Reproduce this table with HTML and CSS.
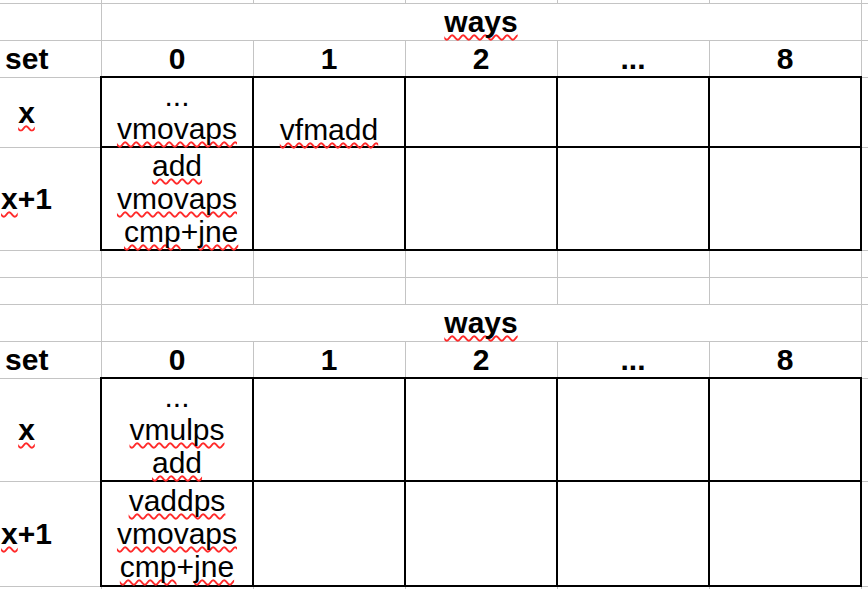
FILE: index.html
```html
<!DOCTYPE html>
<html>
<head>
<meta charset="utf-8">
<link rel="stylesheet" href="styles.css">
</head>
<body>
<table class="sheet">
  <colgroup>
    <col class="col-a"><col class="col-w"><col class="col-w"><col class="col-w"><col class="col-w"><col class="col-w"><col class="col-g">
  </colgroup>
  <tr class="r-top"><td></td><td></td><td></td><td></td><td></td><td></td><td></td></tr>
  <tr class="r-head"><td></td><td colspan="5" class="hd"><span class="sp">ways</span></td><td></td></tr>
  <tr class="r-head"><td class="lbl">set</td><td class="hd">0</td><td class="hd">1</td><td class="hd">2</td><td class="hd">...</td><td class="hd">8</td><td></td></tr>
  <tr class="r-x1"><td class="lbl"><span class="sp">x</span></td><td class="box">...<br><span class="sp">vmovaps</span></td><td class="box bot"><span class="sp">vfmadd</span></td><td class="box"></td><td class="box"></td><td class="box"></td><td></td></tr>
  <tr class="r-x2"><td class="lbl"><span class="sp">x</span>+1</td><td class="box"><span class="sp">add</span><br><span class="sp">vmovaps</span><br>&nbsp;<span class="sp">cmp</span>+<span class="sp">jne</span></td><td class="box"></td><td class="box"></td><td class="box"></td><td class="box"></td><td></td></tr>
  <tr class="r-gap"><td></td><td></td><td></td><td></td><td></td><td></td><td></td></tr>
  <tr class="r-gap"><td></td><td></td><td></td><td></td><td></td><td></td><td></td></tr>
  <tr class="r-head"><td></td><td colspan="5" class="hd"><span class="sp">ways</span></td><td></td></tr>
  <tr class="r-head"><td class="lbl">set</td><td class="hd">0</td><td class="hd">1</td><td class="hd">2</td><td class="hd">...</td><td class="hd">8</td><td></td></tr>
  <tr class="r-x3"><td class="lbl"><span class="sp">x</span></td><td class="box">...<br><span class="sp">vmulps</span><br><span class="sp">add</span></td><td class="box"></td><td class="box"></td><td class="box"></td><td class="box"></td><td></td></tr>
  <tr class="r-x4"><td class="lbl"><span class="sp">x</span>+1</td><td class="box"><span class="sp">vaddps</span><br><span class="sp">vmovaps</span><br><span class="sp">cmp</span>+<span class="sp">jne</span></td><td class="box"></td><td class="box"></td><td class="box"></td><td class="box"></td><td></td></tr>
  <tr class="r-end"><td></td><td></td><td></td><td></td><td></td><td></td><td></td></tr>
</table>
</body>
</html>
```

FILE: styles.css
```css
html, body {
  margin: 0;
  padding: 0;
  background: #ffffff;
  overflow: hidden;
}

.sheet {
  border-collapse: collapse;
  table-layout: fixed;
  width: 868px;
  font-family: "Liberation Sans", Arial, sans-serif;
  font-size: 30px;
  line-height: 33px;
  color: #000;
}

.col-a { width: 101px; }
.col-w { width: 152px; }
.col-g { width: 7px; }

.sheet td {
  padding: 0;
  border: 1px solid #c4c4c4;
  text-align: center;
  vertical-align: middle;
  white-space: nowrap;
  overflow: visible;
}

.sheet tr:first-child td { border-top: none; }
.sheet td:first-child { border-left: none; }
.sheet td:last-child { border-right: none; }

.r-top { height: 3px; }
.r-head { height: 37px; }
.r-x1 { height: 70px; }
.r-x2 { height: 103px; }
.r-gap { height: 27px; }
.r-x3 { height: 103px; }
.r-x4 { height: 105px; }
.r-end { height: 20px; }

.sheet td.hd { font-weight: bold; }

.sheet td.lbl {
  font-weight: bold;
  padding-right: 47px;
}

.sheet td.box { border: 2px solid #000; }
.sheet td.bot { vertical-align: bottom; }

.sp {
  text-decoration-line: underline;
  text-decoration-style: wavy;
  text-decoration-color: #ff2a2a;
  text-decoration-thickness: 1.5px;
  text-decoration-skip-ink: none;
  text-underline-offset: 2px;
}
```
